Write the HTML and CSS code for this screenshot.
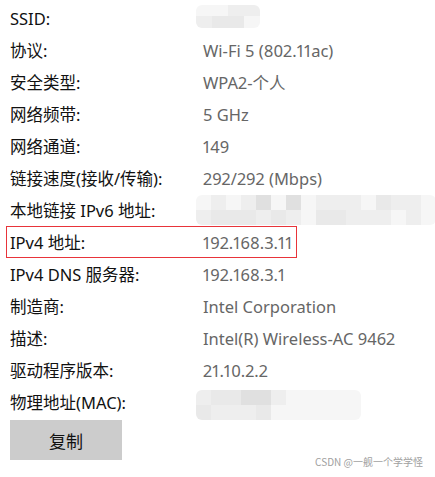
FILE: index.html
```html
<!DOCTYPE html>
<html lang="zh-CN">
<head>
<meta charset="utf-8">
<title>Wi-Fi 属性</title>
<link rel="stylesheet" href="styles.css">
</head>
<body>
<div class="page">
  <div class="row"><span class="label">SSID:</span><span class="value"><span class="blur ssid"><span class="bl g1"></span><span class="bl g2"></span><span class="bl g1"></span><span class="bl g3"></span><span class="bl g2"></span><span class="bl g3"></span><span class="bl g2"></span><span class="bl g1"></span></span></span></div>
  <div class="row"><span class="label">协议:</span><span class="value">Wi-Fi 5 (802.11ac)</span></div>
  <div class="row"><span class="label">安全类型:</span><span class="value">WPA2-个人</span></div>
  <div class="row"><span class="label">网络频带:</span><span class="value">5 GHz</span></div>
  <div class="row"><span class="label">网络通道:</span><span class="value">149</span></div>
  <div class="row"><span class="label">链接速度(接收/传输):</span><span class="value">292/292 (Mbps)</span></div>
  <div class="row"><span class="label">本地链接 IPv6 地址:</span><span class="value"><span class="blur ipv6"><span class="bl g1"></span><span class="bl g2"></span><span class="bl g2"></span><span class="bl g3"></span><span class="bl g1"></span><span class="bl g3"></span><span class="bl g2"></span><span class="bl g3"></span><span class="bl g4"></span><span class="bl g2"></span><span class="bl g1"></span><span class="bl g3"></span><span class="bl g4"></span><span class="bl g2"></span><span class="bl g1"></span><span class="bl g1"></span><span class="bl g2"></span><span class="bl g3"></span><span class="bl g2"></span><span class="bl g3"></span><span class="bl g2"></span><span class="bl g2"></span><span class="bl g1"></span><span class="bl g2"></span><span class="bl g3"></span><span class="bl g2"></span><span class="bl g2"></span><span class="bl g1"></span><span class="bl g2"></span><span class="bl g2"></span><span class="bl g1"></span><span class="bl g1"></span></span></span></div>
  <div class="row row-hl"><span class="label">IPv4 地址:</span><span class="value">192.168.3.11</span></div>
  <div class="row"><span class="label">IPv4 DNS 服务器:</span><span class="value">192.168.3.1</span></div>
  <div class="row"><span class="label">制造商:</span><span class="value">Intel Corporation</span></div>
  <div class="row"><span class="label">描述:</span><span class="value">Intel(R) Wireless-AC 9462</span></div>
  <div class="row"><span class="label">驱动程序版本:</span><span class="value">21.10.2.2</span></div>
  <div class="row"><span class="label">物理地址(MAC):</span><span class="value"><span class="blur mac"><span class="bl g2"></span><span class="bl g3"></span><span class="bl g3"></span><span class="bl g2"></span><span class="bl g3"></span><span class="bl g2"></span><span class="bl g4"></span><span class="bl g2"></span><span class="bl g4"></span><span class="bl g3"></span><span class="bl g2"></span><span class="bl g1"></span><span class="bl g1"></span><span class="bl g1"></span><span class="bl g1"></span><span class="bl g1"></span><span class="bl g1"></span><span class="bl g1"></span><span class="bl g1"></span><span class="bl g1"></span><span class="bl g1"></span><span class="bl g1"></span></span></span></div>
  <div class="actions"><button class="btn">复制</button></div>
  <div class="watermark">CSDN @一舰一个学学怪</div>
</div>
</body>
</html>
```
FILE: styles.css
```css
html, body {
  margin: 0;
  padding: 0;
  background: #ffffff;
}
.page {
  position: relative;
  width: 435px;
  height: 477px;
  padding-top: 2px;
  box-sizing: border-box;
  font-family: "Noto Sans", "Noto Sans CJK SC", sans-serif;
  font-size: 16.5px;
  color: #111111;
}
.row {
  display: flex;
  align-items: center;
  height: 32px;
  padding-left: 10px;
  box-sizing: border-box;
}
.row-hl {
  margin-left: 6px;
  padding-left: 3px;
  width: 291px;
  border: 1px solid #e8343a;
}
.label {
  width: 193px;
  flex: none;
  white-space: nowrap;
}
.value {
  color: #666666;
  white-space: nowrap;
  font-variant-numeric: proportional-nums;
}
.blur {
  display: grid;
  grid-auto-flow: column;
  grid-template-rows: 1fr 1fr;
  margin-left: -7px;
  border-radius: 6px;
  overflow: hidden;
}
.ssid {
  height: 23px;
  grid-template-columns: repeat(4, 16px);
  margin-top: -4px;
}
.ipv6 {
  height: 30px;
  grid-template-columns: repeat(16, 15px);
}
.mac {
  height: 30px;
  grid-template-columns: repeat(11, 15px);
  margin-top: 6px;
}
.bl.g1 { background: #f6f6f6; }
.bl.g2 { background: #eeeeee; }
.bl.g3 { background: #e9e9e9; }
.bl.g4 { background: #e0e0e0; }
.actions {
  padding-left: 10px;
  margin-top: 2px;
}
.btn {
  width: 112px;
  height: 40px;
  border: none;
  background: #cccccc;
  font-family: "Noto Sans CJK SC", sans-serif;
  font-size: 17px;
  color: #111111;
  padding: 0;
}
.watermark {
  position: absolute;
  right: 12px;
  bottom: 8px;
  font-family: "Noto Sans CJK SC", sans-serif;
  font-size: 10px;
  color: #a0a0a0;
}
```
